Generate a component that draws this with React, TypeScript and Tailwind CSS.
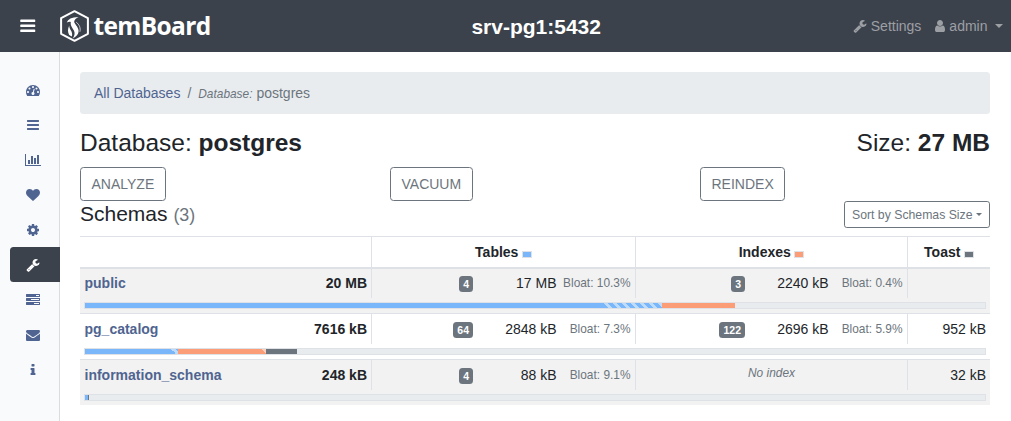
import React from "react";

const ICONS = {
  dashboard:
    "M384 1152q0-53-37.5-90.5t-90.5-37.5-90.5 37.5-37.5 90.5 37.5 90.5 90.5 37.5 90.5-37.5 37.5-90.5zm192-448q0-53-37.5-90.5t-90.5-37.5-90.5 37.5-37.5 90.5 37.5 90.5 90.5 37.5 90.5-37.5 37.5-90.5zm428 481l101-382q6-26-7.5-48.5t-38.5-29.5-48 6.5-30 39.5l-101 382q-60 5-107 43.5t-63 98.5q-20 77 20 146t117 89 146-20 89-117q16-60-6-117t-72-91zm660-33q0-53-37.5-90.5t-90.5-37.5-90.5 37.5-37.5 90.5 37.5 90.5 90.5 37.5 90.5-37.5 37.5-90.5zm-640-640q0-53-37.5-90.5t-90.5-37.5-90.5 37.5-37.5 90.5 37.5 90.5 90.5 37.5 90.5-37.5 37.5-90.5zm448 192q0-53-37.5-90.5t-90.5-37.5-90.5 37.5-37.5 90.5 37.5 90.5 90.5 37.5 90.5-37.5 37.5-90.5zm320 448q0 261-141 483-19 29-54 29h-1402q-35 0-54-29-141-221-141-483 0-182 71-348t191-286 286-191 348-71 348 71 286 191 191 286 71 348z",
  bars: "M1664 1344v128q0 26-19 45t-45 19h-1408q-26 0-45-19t-19-45v-128q0-26 19-45t45-19h1408q26 0 45 19t19 45zm0-512v128q0 26-19 45t-45 19h-1408q-26 0-45-19t-19-45v-128q0-26 19-45t45-19h1408q26 0 45 19t19 45zm0-512v128q0 26-19 45t-45 19h-1408q-26 0-45-19t-19-45v-128q0-26 19-45t45-19h1408q26 0 45 19t19 45z",
  chart:
    "M640 896v512h-256v-512h256zm384-512v1024h-256v-1024h256zm1024 1152v128h-2048v-1536h128v1408h1920zm-640-896v768h-256v-768h256zm384-384v1152h-256v-1152h256z",
  heart:
    "M896 1664q-26 0-44-18l-624-602q-10-8-27.5-26t-55.5-65.5-68-97.5-53.5-121-23.5-138q0-220 127-344t351-124q62 0 126.5 21.5t120 58 95.5 68.5 76 68q36-36 76-68t95.5-68.5 120-58 126.5-21.5q224 0 351 124t127 344q0 221-229 450l-623 600q-18 18-44 18z",
  cog: "M1152 896q0-106-75-181t-181-75-181 75-75 181 75 181 181 75 181-75 75-181zm512-109v222q0 12-8 23t-20 13l-185 28q-19 54-39 91 35 50 107 138 10 12 10 25t-9 23q-27 37-99 108t-94 71q-12 0-26-9l-138-108q-44 23-91 38-16 136-29 186-7 28-36 28h-222q-14 0-24.5-8.5t-11.5-21.5l-28-184q-49-16-90-37l-141 107q-10 9-25 9-14 0-25-11-126-114-165-168-7-10-7-23 0-12 8-23 15-21 51-66.5t54-70.5q-27-50-41-99l-183-27q-13-2-21-12.5t-8-23.5v-222q0-12 8-23t19-13l186-28q14-46 39-92-40-57-107-138-10-12-10-24 0-10 9-23 26-36 98.5-107.5t94.5-71.5q13 0 26 10l138 107q44-23 91-38 16-136 29-186 7-28 36-28h222q14 0 24.5 8.5t11.5 21.5l28 184q49 16 90 37l142-107q9-9 24-9 13 0 25 10 129 119 165 170 7 8 7 22 0 12-8 23-15 21-51 66.5t-54 70.5q26 50 41 98l183 28q13 2 21 12.5t8 23.5z",
  wrench:
    "M448 1472q0-26-19-45t-45-19-45 19-19 45 19 45 45 19 45-19 19-45zm644-420l-682 682q-37 37-90 37-52 0-91-37l-106-108q-38-36-38-90 0-53 38-91l681-681q39 98 114.5 173.5t173.5 114.5zm634-435q0 39-23 106-47 134-164.5 217.5t-258.5 83.5q-185 0-316.5-131.5t-131.5-316.5 131.5-316.5 316.5-131.5q58 0 121.5 16.5t107.5 46.5q16 11 16 28t-16 28l-293 169v224l193 107q5-3 79-48.5t135.5-81 70.5-35.5q15 0 23.5 10t8.5 25z",
  tasks:
    "M1024 1408h640v-128h-640v128zm-384-512h1024v-128h-1024v128zm640-512h384v-128h-384v128zm512 832v256q0 26-19 45t-45 19h-1664q-26 0-45-19t-19-45v-256q0-26 19-45t45-19h1664q26 0 45 19t19 45zm0-512v256q0 26-19 45t-45 19h-1664q-26 0-45-19t-19-45v-256q0-26 19-45t45-19h1664q26 0 45 19t19 45zm0-512v256q0 26-19 45t-45 19h-1664q-26 0-45-19t-19-45v-256q0-26 19-45t45-19h1664q26 0 45 19t19 45z",
  envelope:
    "M1792 710v794q0 66-47 113t-113 47h-1472q-66 0-113-47t-47-113v-794q44 49 101 87 362 246 497 345 57 42 92.5 65.5t94.5 48 110 24.5h2q51 0 110-24.5t94.5-48 92.5-65.5q170-123 498-345 57-39 100-87zm0-294q0 79-49 151t-122 123q-376 261-468 325-10 7-42.5 31t-54 38.5-52 32.5-57.5 27-50 9h-2q-23 0-50-9t-57.5-27-52-32.5-54-38.5-42.5-31q-91-64-262-182.5t-205-142.5q-62-42-117-115.5t-55-136.5q0-78 41.5-130t118.5-52h1472q65 0 112.5 47t47.5 113z",
  info: "M1216 1344v128q0 26-19 45t-45 19h-512q-26 0-45-19t-19-45v-128q0-26 19-45t45-19h64v-384h-64q-26 0-45-19t-19-45v-128q0-26 19-45t45-19h384q26 0 45 19t19 45v576h64q26 0 45 19t19 45zm-128-1152v192q0 26-19 45t-45 19h-256q-26 0-45-19t-19-45v-192q0-26 19-45t45-19h256q26 0 45 19t19 45z",
  user: "M1536 1399q0 109-62.5 187t-150.5 78h-854q-88 0-150.5-78t-62.5-187q0-85 8.5-160.5t31.5-152 58.5-131 94-89 134.5-34.5q131 128 313 128t313-128q76 0 134.5 34.5t94 89 58.5 131 31.5 152 8.5 160.5zm-256-887q0 159-112.5 271.5t-271.5 112.5-271.5-112.5-112.5-271.5 112.5-271.5 271.5-112.5 271.5 112.5 112.5 271.5z",
};

type IconName = keyof typeof ICONS;

function Icon({ name, className = "h-3.5" }: { name: IconName; className?: string }) {
  const width = name === "chart" ? 2048 : 1792;
  return (
    <svg viewBox={`0 0 ${width} 1792`} className={`shrink-0 ${className}`} fill="currentColor">
      <path d={ICONS[name]} />
    </svg>
  );
}

function Logo() {
  return (
    <svg viewBox="0 0 29 32" className="h-8 w-[29px] shrink-0">
      <path
        d="M14.5 1.2 27.9 8.2V23.8L14.5 30.8 1.1 23.8V8.2Z"
        fill="none"
        stroke="#fff"
        strokeWidth="2"
        strokeLinejoin="round"
      />
      <path
        d="M6.8 12.6C8 9.2 11.4 7.2 18.6 7C16 8.4 14.4 9.6 14.2 11.4C14 13.8 18.4 16.4 18.6 20.8C18.7 24 16.8 26.6 12.8 28.4C14.8 25.4 15.2 22.8 13.8 20.2C12.4 17.8 10.2 15.4 10.8 11.9C9.6 11.5 8.2 11.7 6.8 12.6Z"
        fill="#fff"
      />
      <path d="M9.3 15.6C7.6 18.8 7.6 22.6 9.2 25L11.8 26.6C12.6 24.4 12 22 10.6 20C9.7 18.6 9.1 17.2 9.3 15.6Z" fill="#fff" />
      <path d="M16.2 12.2C19.4 14.6 20.8 18 19.9 21.8" fill="none" stroke="#fff" strokeWidth="0.7" />
    </svg>
  );
}

function Caret({ className }: { className: string }) {
  return <span className={`inline-block h-0 w-0 border-x-transparent border-t-current ${className}`} />;
}

const NAV: IconName[] = ["dashboard", "bars", "chart", "heart", "cog", "wrench", "tasks", "envelope", "info"];

const SEGMENT = {
  table: "bg-[#79b6fa]",
  tableBloat:
    "bg-[#79b6fa] bg-[linear-gradient(45deg,rgba(255,255,255,.5)_25%,transparent_25%,transparent_50%,rgba(255,255,255,.5)_50%,rgba(255,255,255,.5)_75%,transparent_75%)] bg-[length:9px_9px]",
  index: "bg-[#fb9e78]",
  indexBloat:
    "bg-[#fb9e78] bg-[linear-gradient(45deg,rgba(255,255,255,.5)_25%,transparent_25%,transparent_50%,rgba(255,255,255,.5)_50%,rgba(255,255,255,.5)_75%,transparent_75%)] bg-[length:9px_9px]",
  toast: "bg-[#6c757d]",
};

type Part = { count: string; size: string; bloat: string };
type Schema = {
  name: string;
  total: string;
  tables: Part;
  indexes: Part | null;
  toast: string;
  bar: [keyof typeof SEGMENT, number][];
};

const SCHEMAS: Schema[] = [
  {
    name: "public",
    total: "20 MB",
    tables: { count: "4", size: "17 MB", bloat: "10.3%" },
    indexes: { count: "3", size: "2240 kB", bloat: "0.4%" },
    toast: "",
    bar: [["table", 518], ["tableBloat", 59], ["index", 73]],
  },
  {
    name: "pg_catalog",
    total: "7616 kB",
    tables: { count: "64", size: "2848 kB", bloat: "7.3%" },
    indexes: { count: "122", size: "2696 kB", bloat: "5.9%" },
    toast: "952 kB",
    bar: [["table", 86], ["tableBloat", 7], ["index", 83], ["indexBloat", 5], ["toast", 31]],
  },
  {
    name: "information_schema",
    total: "248 kB",
    tables: { count: "4", size: "88 kB", bloat: "9.1%" },
    indexes: null,
    toast: "32 kB",
    bar: [["table", 3], ["toast", 1]],
  },
];

const COLS = "grid grid-cols-[291px_264px_272px_83px]";

function PartCell({ part }: { part: Part }) {
  return (
    <div className="flex border-l border-[#dee2e6] pr-[4.5px] pt-[5px]">
      <div className="flex flex-1 justify-end pt-[3px]">
        <span className="h-4 rounded-[3.5px] bg-[#6c757d] px-1 text-[10.5px] font-bold leading-4 text-white">
          {part.count}
        </span>
      </div>
      <div className="w-[83.5px] text-right">{part.size}</div>
      <div className="w-[74px] text-right text-[11.9px] text-[#6c757d]">Bloat: {part.bloat}</div>
    </div>
  );
}

function SchemaRow({ schema, index }: { schema: Schema; index: number }) {
  return (
    <div
      className={`flow-root ${index === 0 ? "h-[44px]" : "h-[46px] border-t border-[#dee2e6]"} ${
        index % 2 === 0 ? "bg-[#f2f2f2]" : "bg-white"
      }`}
    >
      <div className={`${COLS} ${index === 0 ? "-mt-px h-[30px]" : "h-[30px]"} leading-[21px]`}>
        <div className="flex justify-between pl-[4.5px] pr-1 pt-[5px] font-bold">
          <span className="text-[#4f6490]">{schema.name}</span>
          <span>{schema.total}</span>
        </div>
        <PartCell part={schema.tables} />
        {schema.indexes ? (
          <PartCell part={schema.indexes} />
        ) : (
          <div className="border-l border-[#dee2e6] pt-[3px] text-center text-[11.9px] italic text-[#6c757d]">
            No index
          </div>
        )}
        <div className="border-l border-[#dee2e6] pr-1 pt-[5px] text-right">{schema.toast}</div>
      </div>
      <div className="mx-1 mt-1 flex h-[7px] border border-[#dee2e6] bg-[#e9ecef]">
        {schema.bar.map(([kind, width]) => (
          <div key={kind} className={SEGMENT[kind]} style={{ width }} />
        ))}
      </div>
    </div>
  );
}

function HeadCell({ label, swatch }: { label: string; swatch: string }) {
  return (
    <div className="flex justify-center border-l border-[#dee2e6] pt-[5px]">
      {label}
      <span className={`ml-[3.5px] mt-[9px] h-[7px] w-2.5 border border-[#dee2e6] ${swatch}`} />
    </div>
  );
}

function ActionButton({ label }: { label: string }) {
  return (
    <div className="w-[310px]">
      <button className="block h-[34px] rounded-[3.5px] border border-[#6c757d] px-[10.5px] leading-[21px] text-[#6c757d]">
        {label}
      </button>
    </div>
  );
}

export default function App() {
  return (
    <div className="flex h-[421px] w-[1011px] flex-col overflow-hidden bg-white font-['Liberation_Sans',Arial,sans-serif] text-sm text-[#212529]">
      <header className="flex h-[52px] shrink-0 items-center bg-[#3c424c] text-white">
        <div className="flex w-[471.4px] items-center">
          <Icon name="bars" className="ml-[19px] h-[17.5px]" />
          <div className="ml-[23px] flex items-center">
            <Logo />
            <span className="ml-[5px] font-['Open_Sans',sans-serif] text-[24.5px] font-bold leading-8 tracking-[-0.65px]">
              temBoard
            </span>
          </div>
        </div>
        <h1 className="pt-0.5 text-[21px] font-bold leading-6">srv-pg1:5432</h1>
        <div className="flex flex-1 items-center justify-end pr-2 text-[#9c9fa4]">
          <Icon name="wrench" />
          <span className="ml-[3.5px]">Settings</span>
          <Icon name="user" className="ml-3 h-3.5" />
          <span className="ml-0.5">admin</span>
          <Caret className="ml-[7.5px] border-x-4 border-t-4" />
        </div>
      </header>
      <div className="flex flex-1">
        <nav className="flex w-[60px] shrink-0 flex-col border-r border-[#dbdcde] bg-[#f8fafc] pt-[21px] text-[#4f6490]">
          {NAV.map((name) => (
            <a
              key={name}
              className={`ml-2.5 flex h-[34.9px] shrink-0 items-center justify-center ${
                name === "wrench" ? "-mr-px rounded-l-[3.5px] bg-[#3c424c] pr-1 text-white" : "pr-[3px]"
              }`}
            >
              <Icon name={name} />
            </a>
          ))}
        </nav>
        <main className="flex-1 border-r border-[#343a40] px-5 pt-5">
          <div className="flex h-[42px] w-[910px] items-center rounded-[3.5px] bg-[#e9ecef] px-3.5">
            <span className="text-[#4f6490]">All Databases</span>
            <span className="px-[7px] text-[#6c757d]">/</span>
            <span className="text-[#6c757d]">
              <i className="text-[11.9px]">Database:</i> postgres
            </span>
          </div>
          <div className="flex h-[53px] w-[910px] justify-between pt-3.5 text-[24.5px] leading-[30px]">
            <h2>
              Database: <b>postgres</b>
            </h2>
            <div>
              Size: <b>27 MB</b>
            </div>
          </div>
          <div className="flex h-[34px]">
            <ActionButton label="ANALYZE" />
            <ActionButton label="VACUUM" />
            <ActionButton label="REINDEX" />
          </div>
          <div className="flex h-[35px] w-[910px] justify-between">
            <h3 className="text-[21px] leading-[26px]">
              Schemas <span className="text-[17.85px] text-[#6c757d]">(3)</span>
            </h3>
            <button className="flex h-[27px] w-[146px] items-center whitespace-nowrap rounded-[2.8px] border border-[#6c757d] pl-[7px] pt-0.5 text-[12.25px] text-[#6c757d]">
              Sort by Schemas Size
              <Caret className="-mt-0.5 ml-[3px] border-x-[3px] border-t-[3px]" />
            </button>
          </div>
          <div className="w-[910px]">
            <div className={`${COLS} h-[33px] border-b-2 border-t border-[#dee2e6] font-bold leading-[21px]`}>
              <div />
              <HeadCell label="Tables" swatch="bg-[#79b6fa]" />
              <HeadCell label="Indexes" swatch="bg-[#fb9e78]" />
              <HeadCell label="Toast" swatch="bg-[#6c757d]" />
            </div>
            {SCHEMAS.map((schema, index) => (
              <SchemaRow key={schema.name} schema={schema} index={index} />
            ))}
          </div>
        </main>
      </div>
    </div>
  );
}
